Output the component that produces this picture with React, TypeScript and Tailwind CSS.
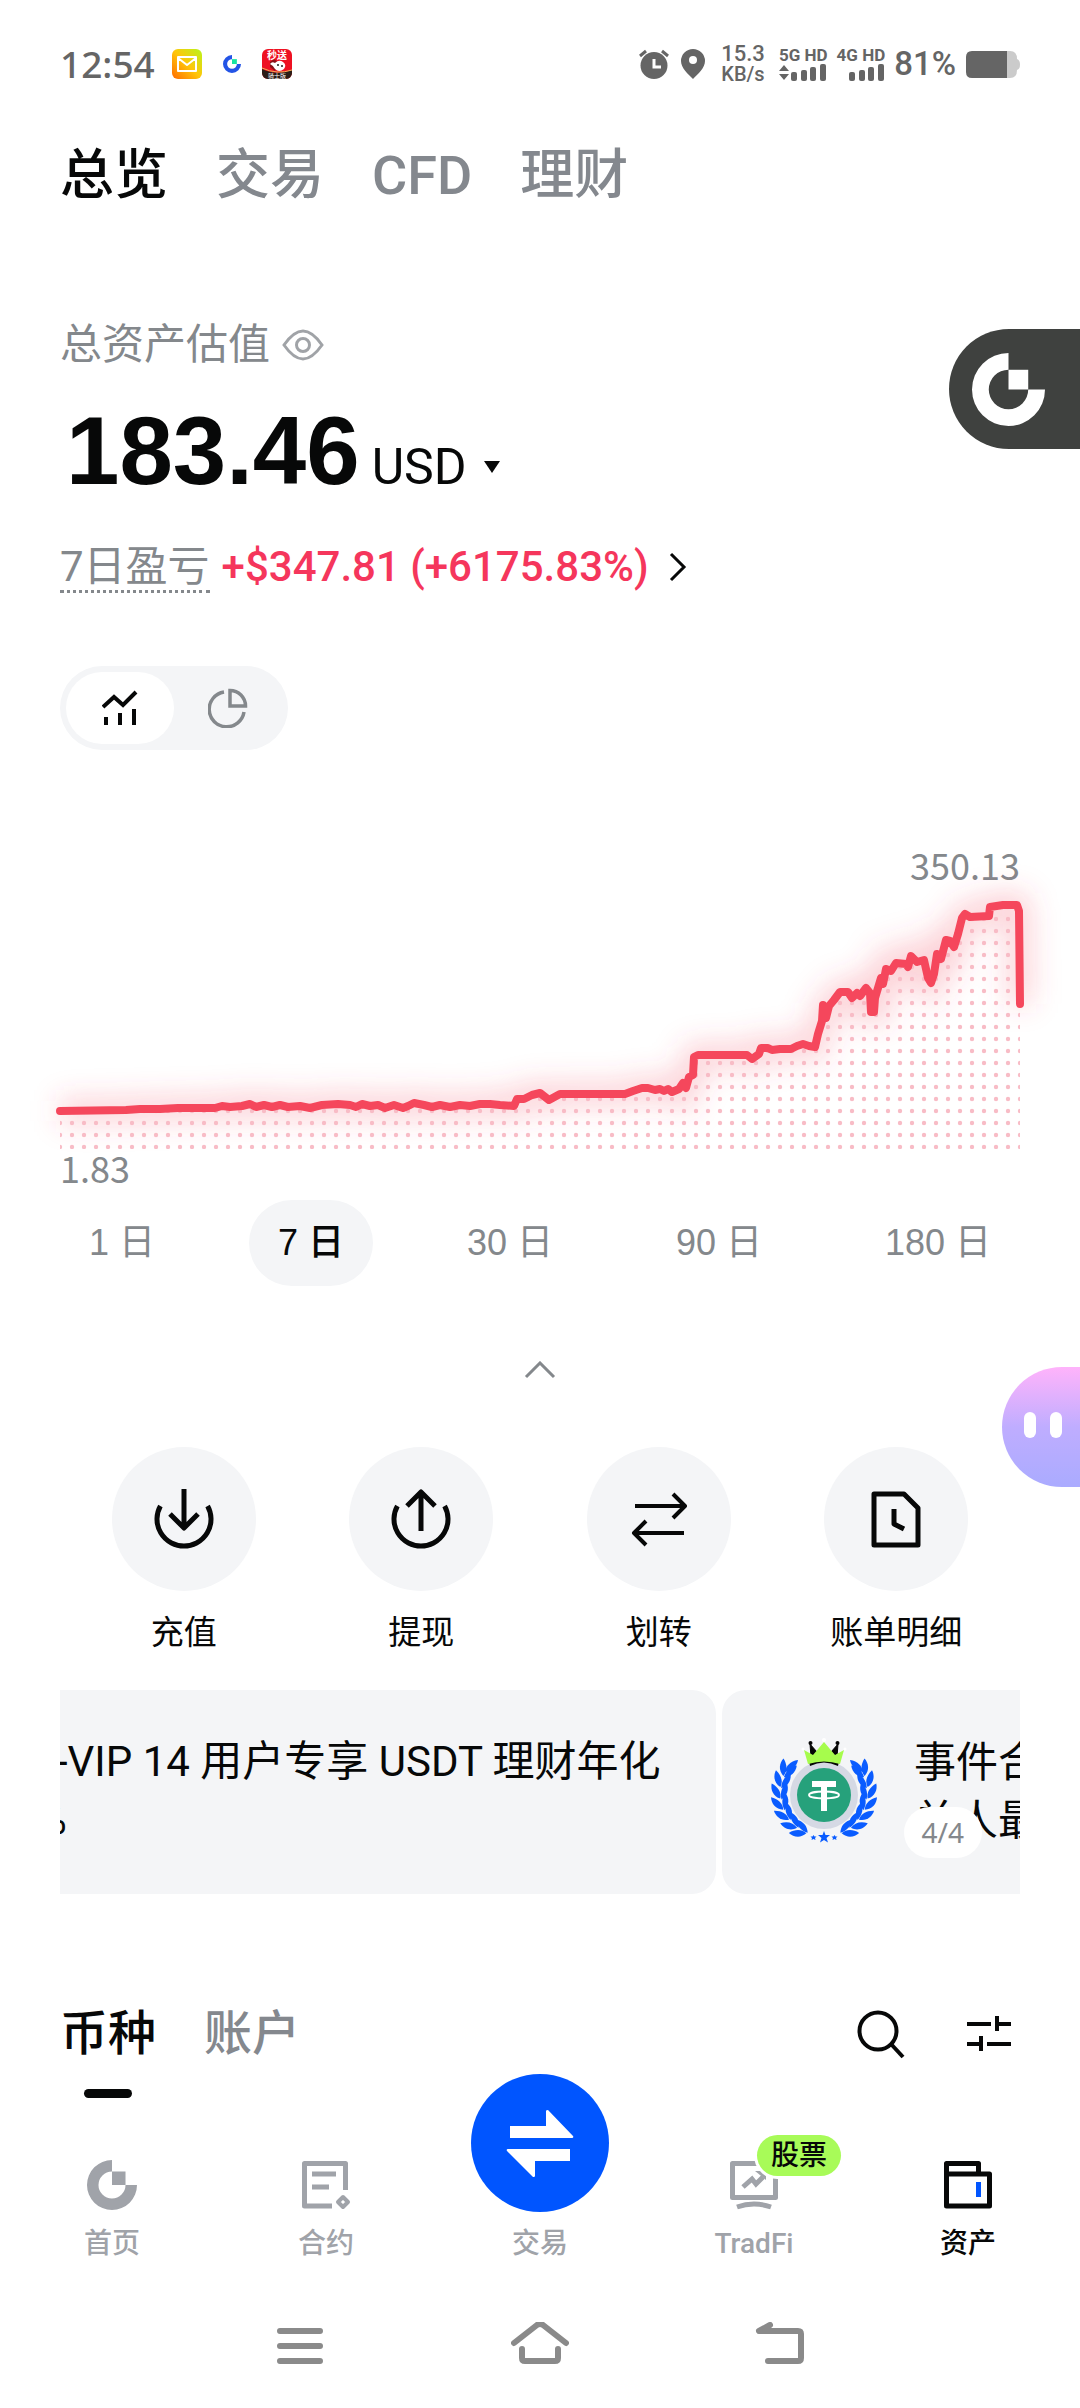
import { useState, type ReactNode } from 'react'

const TABS = ['总览', '交易', 'CFD', '理财']
const RANGES = ['1', '7', '30', '90', '180']

// Equity curve, in plot units (960 x 263)
const CURVE: [number, number][] = [
  [0, 225], [66, 224], [80, 223], [100, 223], [118, 222], [150, 222], [155, 222], [162, 220], [170, 221], [182, 220], [190, 218],
  [196, 221], [204, 219], [212, 221], [220, 219], [228, 221], [240, 220], [250, 222], [262, 219], [278, 218], [290, 219],
  [296, 221], [302, 218], [310, 220], [318, 219], [325, 222], [334, 219], [343, 222], [348, 220], [354, 217],
  [364, 219], [372, 221], [380, 219], [390, 221], [400, 219], [410, 220], [420, 218], [430, 218], [440, 219], [454, 220],
  [457, 213], [464, 213], [472, 209],
  [480, 207], [489, 214], [500, 208], [565, 208], [573, 205], [582, 202], [588, 202], [595, 204], [600, 203],
  [604, 205], [608, 203], [612, 206], [619, 203], [623, 197], [626, 202], [629, 191], [633, 189], [634, 171], [638, 169], [687, 169],
  [692, 173], [699, 168], [701, 162], [708, 162], [712, 164], [720, 163], [731, 163], [737, 160], [743, 158], [749, 160], [755, 161],
  [758, 148], [762, 135], [763, 119], [766, 132], [769, 120], [774, 114], [777, 110], [780, 106], [788, 106],
  [792, 112], [797, 107], [800, 110], [806, 102], [810, 107], [811, 126], [814, 126], [815, 112], [821, 92], [823, 98],
  [826, 83], [831, 85], [836, 77], [846, 78], [848, 81], [851, 70], [857, 76], [864, 74], [868, 92], [871, 97],
  [874, 88], [877, 68], [881, 73], [886, 54], [890, 55], [894, 61], [898, 48], [902, 32], [905, 28], [910, 31],
  [929, 30], [930, 21], [943, 19], [957, 19], [959, 25], [960, 118],
]

const LINE = CURVE.map(([x, y]) => `${x},${y}`).join(' ')

function GateLogo({ className, square = 'currentColor' }: { className: string; square?: string }) {
  return (
    <svg viewBox="0 0 74 74" className={className} fill="currentColor" aria-hidden="true">
      <path d="M37 0A37 37 0 1 0 74 37H57A20 20 0 1 1 37 17Z" />
      <path d="M37 17h20v20H37z" fill={square} />
    </svg>
  )
}

function SignalBars({ arrows }: { arrows?: boolean }) {
  return (
    <svg viewBox="0 0 48 17" className="h-[17px] w-12" fill="currentColor" aria-hidden="true">
      {arrows && <path d="M0 7l5-6 5 6zM0 10h10l-5 6z" />}
      <rect x="12" y="8" width="6" height="9" rx="2" />
      <rect x="22" y="6" width="6" height="11" rx="2" />
      <rect x="31" y="3" width="6" height="14" rx="2" />
      <rect x="41" y="0" width="6" height="17" rx="2" />
    </svg>
  )
}

function StatusBar() {
  return (
    <header className="flex h-[48px] items-center justify-between pl-[60px] pr-[60px] text-[#656565]">
      <div className="flex items-center">
        <span className="font-['Noto_Sans'] text-[37px] font-medium leading-[48px]">12:54</span>
        <svg viewBox="0 0 30 30" className="ml-[17px] size-[30px]" aria-hidden="true">
          <defs>
            <linearGradient id="mail" x1="0" y1="1" x2="1" y2="0">
              <stop offset="0" stopColor="#ff6a00" />
              <stop offset="0.5" stopColor="#ffc60a" />
              <stop offset="1" stopColor="#b8f51a" />
            </linearGradient>
          </defs>
          <rect width="30" height="30" rx="6" fill="url(#mail)" />
          <path d="M6 8h18v14H6zM6 9l9 7 9-7" fill="none" stroke="#fff" strokeWidth="2" strokeLinejoin="round" />
        </svg>
        <GateLogo className="ml-[21px] size-[18px] text-[#2354e6]" square="#17e5a1" />
        <svg viewBox="0 0 30 30" className="ml-[21px] size-[30px]" aria-hidden="true">
          <rect width="30" height="30" rx="6" fill="#ee1122" />
          <path d="M0 20q15 7 30 1v3a6 6 0 0 1-6 6H6a6 6 0 0 1-6-6z" fill="#2b1d18" />
          <path d="M0 19q15 7 30 2" fill="none" stroke="#f0b35a" strokeWidth="1" />
          <path d="M8 13l4-3 5 4-4 8-5-4z" fill="#8a1018" />
          <path d="M8 15q2-3 5-1 4-4 8-1 4 3 1 7-5 4-9 0-1-3-5-5z" fill="#fff" />
          <circle cx="16" cy="16" r="1" fill="#222" />
          <circle cx="20" cy="17" r="1" fill="#222" />
          <text x="15" y="10" fontSize="10" fontWeight="700" textAnchor="middle" fill="#fff">秒送</text>
          <text x="15" y="29" fontSize="6" textAnchor="middle" fill="#fff">骑士版</text>
        </svg>
      </div>

      <div className="flex items-center">
        <svg viewBox="0 0 30 30" className="size-[30px]" aria-hidden="true">
          <circle cx="15" cy="16.5" r="13.5" fill="currentColor" />
          <path d="M1 7l6-5M29 7l-6-5" stroke="currentColor" strokeWidth="3" />
          <path d="M15 10v8h7" fill="none" stroke="#fff" strokeWidth="3" />
        </svg>
        <svg viewBox="0 0 24 30" className="ml-3 h-[30px] w-6" aria-hidden="true">
          <path d="M12 0a12 12 0 0 1 12 12c0 7-7 13-12 18C7 25 0 19 0 12A12 12 0 0 1 12 0z" fill="currentColor" />
          <circle cx="12" cy="11" r="4" fill="#fff" />
        </svg>
        <div className="ml-4 w-11 text-center text-[20px] font-medium leading-5">
          <div className="text-[22px]">15.3</div>
          <div>KB/s</div>
        </div>
        <div className="ml-[14px] text-[17px] font-bold leading-[17px]">
          <div className="whitespace-nowrap">5G HD</div>
          <SignalBars arrows />
        </div>
        <div className="ml-[9px] text-[17px] font-bold leading-[17px]">
          <div className="whitespace-nowrap">4G HD</div>
          <SignalBars />
        </div>
        <span className="ml-[9px] text-[33px] font-medium leading-[48px]">81%</span>
        <svg viewBox="0 0 54 27" className="ml-[10px] h-[27px] w-[54px]" aria-hidden="true">
          <path d="M40 0h4q7 0 7 8 3 1 3 5.500t-3 5.500q0 8-7 8h-4z" fill="#cbcbcb" />
          <path d="M6 0h35v27H6q-6 0-6-6V6q0-6 6-6z" fill="currentColor" />
        </svg>
      </div>
    </header>
  )
}

function EquityChart() {
  return (
    <svg viewBox="0 0 960 263" className="block h-auto w-full overflow-visible" role="img" aria-label="7日资产走势">
      <defs>
        <pattern id="dots" x="-6" y="0" width="12" height="12" patternUnits="userSpaceOnUse">
          <circle cx="6" cy="9" r="2.200" fill="#f8bcc6" />
        </pattern>
        <filter id="glow" x="-80" y="-60" width="1120" height="400" filterUnits="userSpaceOnUse">
          <feGaussianBlur stdDeviation="14" />
        </filter>
      </defs>
      <polyline points={LINE} fill="none" stroke="#f5475c" strokeOpacity="0.25" strokeWidth="24" filter="url(#glow)" />
      <polygon points={`${LINE} 960,263 0,263`} fill="url(#dots)" />
      <polyline points={LINE} fill="none" stroke="#f5475c" strokeWidth="8" strokeLinecap="round" strokeLinejoin="round" />
    </svg>
  )
}

const LAUREL_ANGLES = [204, 189, 174, 159, 144, 129, 115]

function Laurel() {
  return (
    <g fill="#0a5cff">
      {LAUREL_ANGLES.map((deg) => {
        const a = (deg * Math.PI) / 180
        const x = 52 + 44 * Math.cos(a)
        const y = 53 + 44 * Math.sin(a)
        return (
          <g key={deg} transform={`translate(${x} ${y}) rotate(${deg - 180})`}>
            <path d="M0 1C-7-2-9-9-7-15C-1-11 2-5 0 1z" />
            <path d="M1 2C0-5 3-11 8-14C10-7 7-1 1 2z" />
          </g>
        )
      })}
      <path d="M26 20C18 21 14 26 13 32C20 31 25 26 26 20z" />
    </g>
  )
}

function TetherCrown() {
  return (
    <svg viewBox="0 0 104 104" className="size-[104px] shrink-0 overflow-visible" aria-hidden="true">
      <Laurel />
      <g transform="translate(104 0) scale(-1 1)">
        <Laurel />
      </g>
      <circle cx="52" cy="55" r="34" fill="#d5d9e4" />
      <circle cx="52" cy="55" r="27" fill="#26a17b" />
      <path d="M38 26q14-7 28 0l1-5H37z" fill="#050505" />
      <path d="M38 4l7 8-6 5zM66 4l-7 8 6 5z" fill="#050505" stroke="#050505" strokeLinejoin="round" />
      <circle cx="38.500" cy="3" r="2" fill="#050505" />
      <circle cx="65.500" cy="3" r="2" fill="#050505" />
      <circle cx="52" cy="0" r="2" fill="#fff" />
      <circle cx="31" cy="9" r="1.500" fill="#fff" />
      <circle cx="73" cy="9" r="1.500" fill="#fff" />
      <path d="M32 10l9 5L52 2l11 13 9-5-4 14q-16-5-32 0z" fill="#a6fc4c" />
      <path d="M40 41h24v6h-9v24h-6V47h-9z" fill="#fff" />
      <ellipse cx="52" cy="55" rx="15" ry="3.500" fill="none" stroke="#fff" strokeWidth="1.800" />
      <path d="M52 91l1.500 4h4.500l-3.500 3 1.500 4.500-4-2.500-4 2.500 1.500-4.500-3.500-3h4.500z" fill="#0a5cff" />
      <path d="M41.500 95l1 1.500h2l-1.500 1.500.5 2-2-1-2 1 .5-2-1.500-1.500h2zM62.500 95l1 1.500h2l-1.500 1.500.5 2-2-1-2 1 .5-2-1.500-1.500h2z" fill="#0a5cff" />
    </svg>
  )
}

const ACTIONS: { label: string; icon: ReactNode }[] = [
  {
    label: '充值',
    icon: <path d="M8.400 19a27 27 0 1 0 47.200 0M32 2v39M18 27l14 14 14-14" />,
  },
  {
    label: '提现',
    icon: <path d="M8.400 19a27 27 0 1 0 47.200 0M32 44V5M18 19L32 5l14 14" />,
  },
  {
    label: '划转',
    icon: <path d="M8 19h49M46 7l12 12-12 12M57 46H8M19 34L7 46l12 12" strokeWidth="4" />,
  },
  {
    label: '账单明细',
    icon: <path d="M10 7h30l14 14v37H10zM30 22v15l10 5" />,
  },
]

function NavItem({ label, active, children }: { label: string; active?: boolean; children: ReactNode }) {
  return (
    <a
      href="#"
      className={`flex flex-col items-center text-[28px] font-medium leading-9 ${active ? 'text-[#070808]' : 'text-[#a0a3a9]'}`}
    >
      {children}
      <span>{label}</span>
    </a>
  )
}

export default function App() {
  const [tab, setTab] = useState('总览')
  const [range, setRange] = useState('7')
  const [view, setView] = useState<'line' | 'pie'>('line')
  const [list, setList] = useState('币种')

  return (
    <div className="relative overflow-hidden bg-white pt-10 font-[Roboto,'Noto_Sans_CJK_SC',sans-serif] text-[#070808]">
      <StatusBar />

      <main className="px-[60px]">
        <nav className="mt-[58px] flex gap-12 text-[54px] font-medium leading-[60px]">
          {TABS.map((t) => (
            <button key={t} onClick={() => setTab(t)} className={t === tab ? 'text-[#070808]' : 'text-[#84888e]'}>
              {t}
            </button>
          ))}
        </nav>

        <section>
          <div className="mt-[115px] flex items-center gap-3 text-[42px] leading-[48px] text-[#84888c]">
            <h1>总资产估值</h1>
            <button aria-label="隐藏资产">
              <svg viewBox="0 0 42 32" className="h-8 w-[42px]" fill="none" stroke="#a0a3a7" strokeWidth="3">
                <path d="M2 16C9 6 15 2 21 2s12 4 19 14C33 26 27 30 21 30S9 26 2 16z" />
                <circle cx="21" cy="16" r="6.500" />
              </svg>
            </button>
          </div>

          <div className="mt-[34px] flex items-baseline gap-3 pl-[6px]">
            <span className="font-['Liberation_Sans'] text-[96px] font-bold leading-[96px]">183.46</span>
            <button className="flex items-center gap-4 text-[50px] leading-[48px]">
              USD
              <svg viewBox="0 0 18 12" className="h-3 w-[18px]" fill="currentColor" aria-hidden="true">
                <path d="M1 0h16L9 12z" />
              </svg>
            </button>
          </div>

          <div className="mt-11 flex items-start text-[42px] leading-[47px]">
            <span className="border-b-3 border-dotted border-[#84888c] text-[#84888c]">7日盈亏</span>
            <a href="#" className="ml-3 flex items-center font-medium text-[#f5365c]">
              +$347.81 (+6175.83%)
              <svg viewBox="0 0 18 30" className="ml-5 h-[30px] w-[18px]" fill="none" stroke="#070808" strokeWidth="3" aria-hidden="true">
                <path d="M2 2l13 13L2 28" />
              </svg>
            </a>
          </div>

          <div className="mt-[73px] flex w-fit rounded-full bg-[#f4f5f7] p-[6px]">
            <button
              aria-label="走势"
              onClick={() => setView('line')}
              className={`flex h-[72px] w-[108px] items-center justify-center rounded-full ${view === 'line' ? 'bg-white text-[#070808]' : 'text-[#84888c]'}`}
            >
              <svg viewBox="0 0 36 36" className="size-9" fill="none" stroke="currentColor" strokeWidth="4" aria-hidden="true">
                <path d="M1 17L12 7l9 8L34 2M4 27v8M18 23v12M32 19v16" />
              </svg>
            </button>
            <button
              aria-label="分布"
              onClick={() => setView('pie')}
              className={`flex h-[72px] w-[108px] items-center justify-center rounded-full ${view === 'pie' ? 'bg-white text-[#070808]' : 'text-[#84888c]'}`}
            >
              <svg viewBox="0 0 40 40" className="size-10" fill="none" stroke="currentColor" strokeWidth="3.500" aria-hidden="true">
                <path d="M16 4A17.500 17.500 0 1 0 36 24M22 2.500V18h15.500A15.500 15.500 0 0 0 22 2.500z" />
              </svg>
            </button>
          </div>
        </section>

        <section className="mt-[92px]">
          <div className="text-right font-['Noto_Sans_CJK_SC'] text-[36px] leading-[44px] text-[#84888c]">350.13</div>
          <EquityChart />
          <div className="font-['Noto_Sans_CJK_SC'] text-[36px] leading-9 text-[#84888c]">1.83</div>

          <div className="mt-[15px] flex justify-between font-['Liberation_Sans','Noto_Sans_CJK_SC'] text-[36px] leading-[86px]">
            {RANGES.map((r) => (
              <button
                key={r}
                onClick={() => setRange(r)}
                className={`rounded-full px-[29px] ${r === range ? 'bg-[#f4f5f7] font-medium text-[#070808]' : 'text-[#84888c]'}`}
              >
                {r} 日
              </button>
            ))}
          </div>

          <button aria-label="收起" className="mx-auto mt-16 flex h-10 w-20 items-center justify-center">
            <svg viewBox="0 0 32 18" className="h-[18px] w-8" fill="none" stroke="#84888c" strokeWidth="3" aria-hidden="true">
              <path d="M2 16L16 2l14 14" />
            </svg>
          </button>
        </section>

        <section className="mx-[5px] mt-[57px] grid grid-cols-4">
          {ACTIONS.map(({ label, icon }) => (
            <button key={label} className="flex flex-col items-center gap-[22px] text-[33px] leading-10">
              <span className="flex size-36 items-center justify-center rounded-full bg-[#f4f5f7]">
                <svg viewBox="0 0 64 64" className="size-16" fill="none" stroke="currentColor" strokeWidth="5" strokeLinejoin="round" aria-hidden="true">
                  {icon}
                </svg>
              </span>
              {label}
            </button>
          ))}
        </section>

        <section className="relative mt-[37px] flex gap-[6px] overflow-hidden text-[42px] leading-[58px]">
          <article className="h-[204px] w-[656px] shrink-0 rounded-r-3xl bg-[#f4f5f7] pt-[43px]">
            <p className="-ml-1 whitespace-nowrap">-VIP 14 用户专享 USDT 理财年化</p>
            <p className="-ml-6">%</p>
          </article>
          <article className="flex h-[204px] w-[656px] shrink-0 items-center gap-[38px] rounded-3xl bg-[#f4f5f7] pl-[50px]">
            <TetherCrown />
            <p className="w-[126px] break-all">事件合单人最</p>
          </article>
          {/* carousel counter */}
          <span className="absolute bottom-9 right-[38px] rounded-full bg-white px-[18px] font-['Noto_Sans'] text-[28px] leading-[51px] text-[#84888c]">
            4/4
          </span>
        </section>

        <section className="mt-[112px] flex items-start justify-between">
          <div className="flex gap-12 text-[48px] font-medium leading-[56px]">
            {['币种', '账户'].map((t) => (
              <button key={t} onClick={() => setList(t)} className={t === list ? 'text-[#070808]' : 'text-[#84888e]'}>
                {t}
                <span className={`mx-auto mt-[27px] block h-[9px] w-12 rounded-full ${t === list ? 'bg-[#070808]' : ''}`} />
              </button>
            ))}
          </div>
          <div className="flex h-[56px] items-center gap-[60px] pr-2">
            <button aria-label="搜索">
              <svg viewBox="0 0 50 50" className="size-[50px]" fill="none" stroke="currentColor" strokeWidth="4">
                <circle cx="22" cy="22" r="18.500" />
                <path d="M35 35l12 13" />
              </svg>
            </button>
            <button aria-label="筛选">
              <svg viewBox="0 0 46 36" className="h-9 w-[46px]" fill="none" stroke="currentColor" strokeWidth="4">
                <path d="M1 8h24M31 0v15M31 8h14M1 28h14M15 20v15M21 28h24" />
              </svg>
            </button>
          </div>
        </section>
      </main>

      <nav className="relative mx-[5px] -mt-6 grid grid-cols-5 items-end">
        <NavItem label="首页">
          <GateLogo className="mb-4 size-[50px]" />
        </NavItem>
        <NavItem label="合约">
          <svg viewBox="0 0 50 50" className="mb-4 size-[50px]" fill="none" stroke="currentColor" strokeWidth="5" aria-hidden="true">
            <path d="M31 46H3.500V3.500h41V30M11 14h24M11 27h17" strokeLinejoin="round" />
            <path d="M42 37l5 5-5 5-5-5z" strokeWidth="4" strokeLinejoin="round" />
          </svg>
        </NavItem>
        <NavItem label="交易">
          <span className="mb-[14px] flex size-[138px] items-center justify-center rounded-full bg-[#0055ff]">
            <svg viewBox="0 0 68 68" className="size-[68px]" fill="#fff" aria-hidden="true">
              <path d="M4 17h36V2q0-1 2-1l25 26q1 2-1 2H4zM64 52H29v15q-1 2-2 1L1 42q-1-2 1-2h62z" />
            </svg>
          </span>
        </NavItem>
        <NavItem label="TradFi">
          <span className="relative mb-4">
            <svg viewBox="0 0 50 50" className="size-[50px]" fill="none" stroke="currentColor" strokeWidth="5" aria-hidden="true">
              <path d="M3.500 3.500h43v34h-43z" strokeLinejoin="round" />
              <path d="M14 27l9-8 4 5 7-7M8 47q17-6 34 0" />
              <path d="M26 11h11v9z" fill="currentColor" stroke="none" />
            </svg>
            <span className="absolute -top-[25px] left-[28px] whitespace-nowrap rounded-full bg-[#a8fb58] px-[14px] leading-[41px] text-[#070808] ring-3 ring-white">
              股票
            </span>
          </span>
        </NavItem>
        <NavItem label="资产" active>
          <svg viewBox="0 0 50 50" className="mb-4 size-[50px]" fill="none" stroke="currentColor" strokeWidth="5" strokeLinejoin="round" aria-hidden="true">
            <path d="M3.500 14V3.500h32V14M3.500 14h43v32h-43z" />
            <path d="M35.500 22v15" stroke="#0055ff" />
          </svg>
        </NavItem>
      </nav>

      {/* system navigation keys */}
      <div className="mx-[180px] mt-[60px] grid grid-cols-3 justify-items-center pb-[43px] text-[#8a8a8a]">
        <button aria-label="最近任务">
          <svg viewBox="0 0 48 44" className="h-11 w-12" fill="none" stroke="currentColor" strokeWidth="6" strokeLinecap="round">
            <path d="M4 9h40M4 24h40M4 39h40" />
          </svg>
        </button>
        <button aria-label="主屏幕">
          <svg viewBox="0 0 58 44" className="h-11 w-[58px]" fill="none" stroke="currentColor" strokeWidth="6" strokeLinecap="round" strokeLinejoin="round">
            <path d="M3 21L26 3q3-2 6 0l23 18M11 27v9q0 3 3 3h30q3 0 3-3v-9" />
          </svg>
        </button>
        <button aria-label="返回">
          <svg viewBox="0 0 50 44" className="h-11 w-[50px]" fill="none" stroke="currentColor" strokeWidth="6" strokeLinecap="round" strokeLinejoin="round">
            <path d="M15 3L4 9h39q3 0 3 3v24q0 3-3 3H13" />
          </svg>
        </button>
      </div>

      {/* floating shortcuts docked to the right edge */}
      <button aria-label="Gate" className="absolute right-0 top-[329px] flex h-[120px] w-[131px] items-center rounded-l-full bg-[#3f413f] pl-[23px] text-white">
        <GateLogo className="size-[73px]" />
      </button>
      <button
        aria-label="助手"
        className="absolute right-0 top-[1367px] flex h-[120px] w-[78px] items-center gap-[14px] rounded-l-full bg-linear-to-b from-[#ffb3fb] via-[#bfadff] to-[#aaabff] pb-1 pl-[22px]"
      >
        <span className="h-[26px] w-3 rounded-full bg-white" />
        <span className="h-[26px] w-3 rounded-full bg-white" />
      </button>
    </div>
  )
}
